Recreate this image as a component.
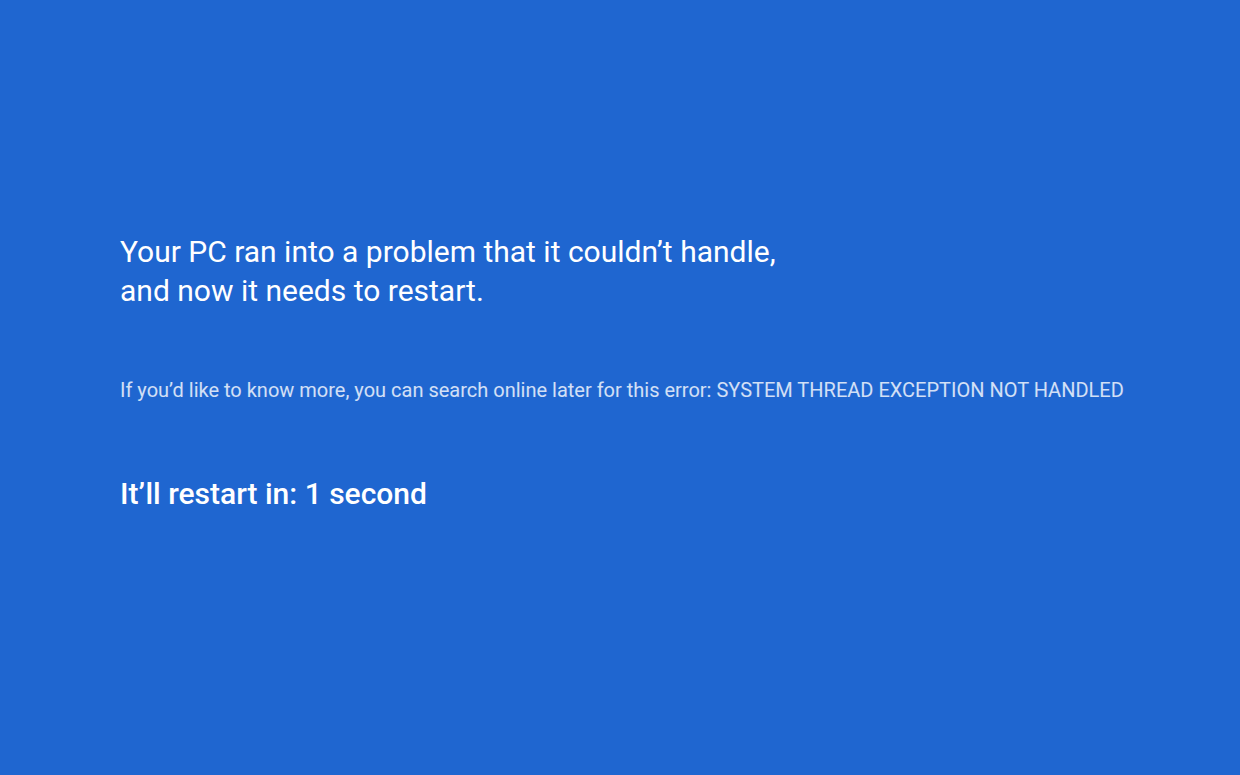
export default function App() {
  return (
    <div
      className="w-full h-[775px] bg-[#1f66d0] text-white"
      style={{ fontFamily: "Roboto, 'Noto Sans', sans-serif" }}
    >
      <div className="pl-[120px] pt-[232px]">
        <h1 className="text-[30px] leading-[39px] font-normal">
          Your PC ran into a problem that it couldn’t handle,
          <br />
          and now it needs to restart.
        </h1>
        <p className="mt-[68px] text-[20px] leading-[24px] text-white/80">
          If you’d like to know more, you can search online later for this error: SYSTEM THREAD EXCEPTION NOT HANDLED
        </p>
        <p className="mt-[74px] text-[30px] leading-[36px] font-medium">
          It’ll restart in: 1 second
        </p>
      </div>
    </div>
  );
}
